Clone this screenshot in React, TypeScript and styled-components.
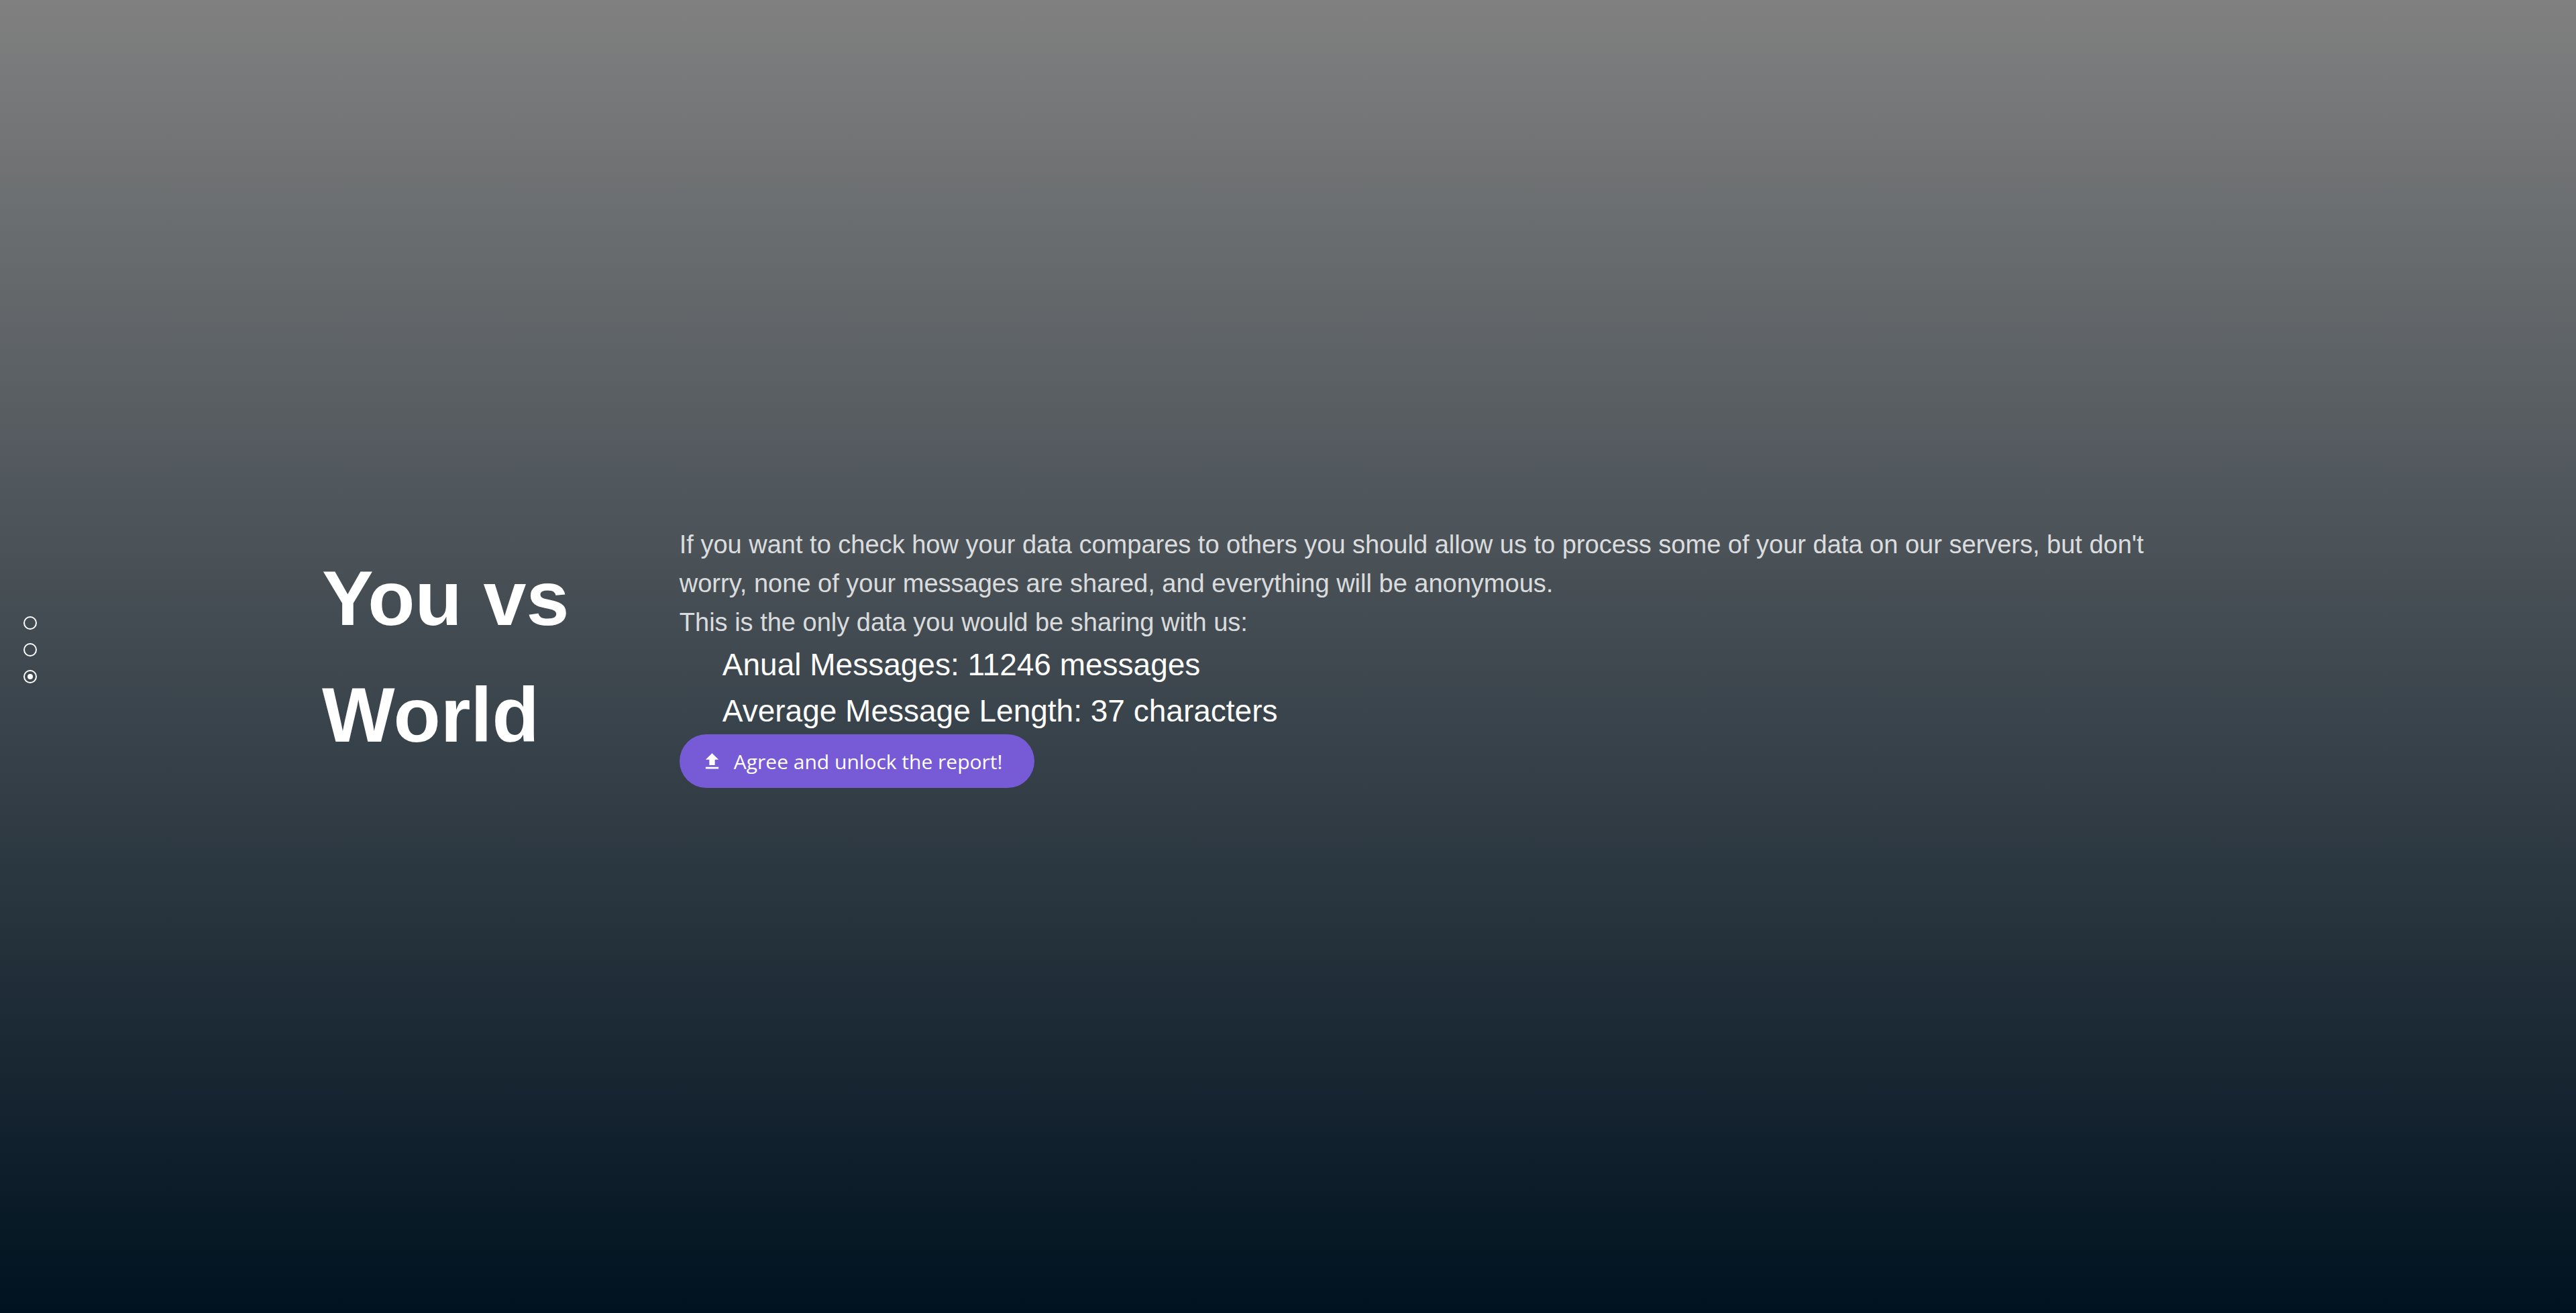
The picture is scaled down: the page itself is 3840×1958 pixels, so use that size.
import React, { useState } from "react";
import styled, { createGlobalStyle } from "styled-components";
import { MdFileUpload } from "react-icons/md";

const GlobalStyle = createGlobalStyle`
  *, *::before, *::after { box-sizing: border-box; }
  body {
    margin: 0;
    color: #fff;
    font-family: "Liberation Sans", Arial, sans-serif;
    font-size: 38px;
    line-height: 58px;
  }
`;

const Page = styled.main`
  display: grid;
  grid-template-columns: 1fr 6fr 1fr;
  align-items: center;
  min-height: 100vh;
  background: linear-gradient(#808080, #001220);
`;

const PageNav = styled.nav`
  display: grid;
  padding-left: 35px;
`;

const Dot = styled.input`
  appearance: none;
  display: grid;
  place-content: center;
  width: 20px;
  height: 20px;
  margin: 0 0 20px;
  border: 2px solid #fff;
  border-radius: 50%;
  cursor: pointer;

  &:checked::before {
    content: "";
    width: 8px;
    height: 8px;
    border-radius: 50%;
    background: #fff;
  }
`;

const Section = styled.section`
  display: grid;
  grid-template-columns: 18.5% 1fr;
  align-items: center;
`;

const Title = styled.h1`
  margin: 0;
  padding-right: 80px;
  font-size: 115px;
  line-height: 174px;
`;

const Details = styled.div`
  padding-right: 80px;
`;

const Copy = styled.p`
  margin: 0;
  opacity: 0.8;
`;

const Stats = styled.ul`
  margin: 0;
  padding: 0 0 0 64px;
  list-style: none;
  font-size: 46px;
  line-height: 69px;
`;

const UnlockButton = styled.button`
  display: flex;
  align-items: center;
  gap: 16px;
  height: 80px;
  padding: 0 48px 0 32px;
  border: 0;
  border-radius: 40px;
  background: #775bd6;
  color: #fff;
  font-family: "Open Sans", "Noto Sans", sans-serif;
  font-size: 30px;
  cursor: pointer;
`;

const views = ["Overview", "Your messages", "You vs World"];

export default function App() {
  const [view, setView] = useState(2);
  return (
    <>
      <GlobalStyle />
      <Page>
        <PageNav>
          {views.map((name, i) => (
            <Dot
              key={name}
              type="radio"
              name="view"
              aria-label={name}
              checked={view === i}
              onChange={() => setView(i)}
            />
          ))}
        </PageNav>
        <Section>
          <Title>You vs World</Title>
          <Details>
            <Copy>
              If you want to check how your data compares to others you should allow us to process
              some of your data on our servers, but don't worry, none of your messages are shared,
              and everything will be anonymous.
            </Copy>
            <Copy>This is the only data you would be sharing with us:</Copy>
            <Stats>
              <li>Anual Messages: 11246 messages</li>
              <li>Average Message Length: 37 characters</li>
            </Stats>
            <UnlockButton type="button">
              <MdFileUpload size={33} />
              Agree and unlock the report!
            </UnlockButton>
          </Details>
        </Section>
      </Page>
    </>
  );
}
